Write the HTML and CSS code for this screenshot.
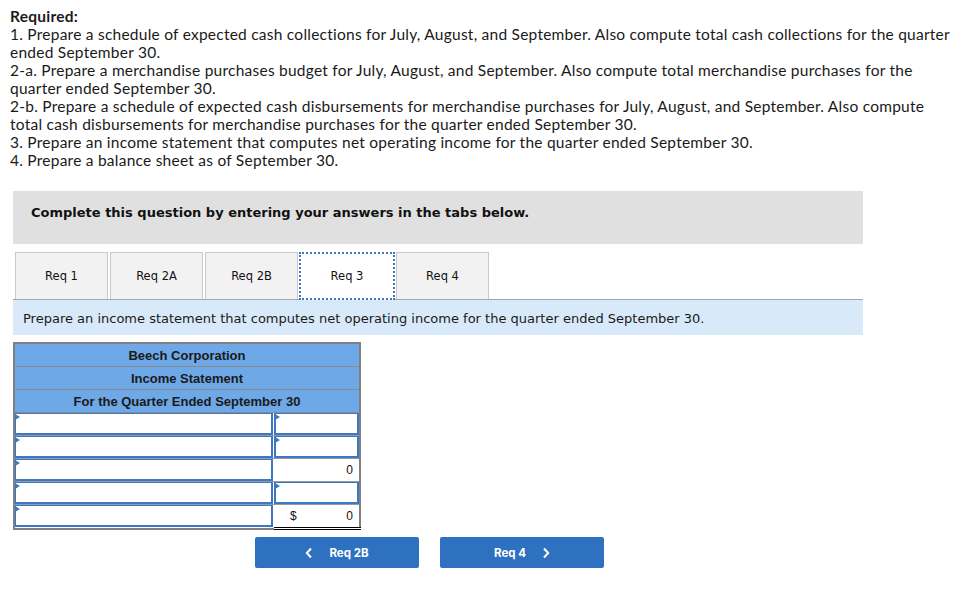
FILE: index.html
```html
<!DOCTYPE html>
<html>
<head>
<meta charset="utf-8">
<link rel="stylesheet" href="styles.css">
</head>
<body>
<div class="required">
  <div class="req-title">Required:</div>
  <div>1. Prepare a schedule of expected cash collections for July, August, and September. Also compute total cash collections for the quarter ended September 30.</div>
  <div>2-a. Prepare a merchandise purchases budget for July, August, and September. Also compute total merchandise purchases for the quarter ended September 30.</div>
  <div>2-b. Prepare a schedule of expected cash disbursements for merchandise purchases for July, August, and September. Also compute total cash disbursements for merchandise purchases for the quarter ended September 30.</div>
  <div>3. Prepare an income statement that computes net operating income for the quarter ended September 30.</div>
  <div>4. Prepare a balance sheet as of September 30.</div>
</div>

<div class="question">
  <div class="notice">Complete this question by entering your answers in the tabs below.</div>
  <div class="tabs">
    <div class="tab">Req 1</div>
    <div class="tab">Req 2A</div>
    <div class="tab">Req 2B</div>
    <div class="tab active">Req 3</div>
    <div class="tab">Req 4</div>
  </div>
  <div class="instruction">Prepare an income statement that computes net operating income for the quarter ended September 30.</div>

  <table class="stmt">
    <tr><th colspan="2">Beech Corporation</th></tr>
    <tr><th colspan="2">Income Statement</th></tr>
    <tr><th colspan="2">For the Quarter Ended September 30</th></tr>
    <tr>
      <td class="lbl"><div class="inp drop"></div></td>
      <td class="amt"><div class="inp drop"></div></td>
    </tr>
    <tr>
      <td class="lbl"><div class="inp drop"></div></td>
      <td class="amt"><div class="inp drop"></div></td>
    </tr>
    <tr>
      <td class="lbl"><div class="inp drop"></div></td>
      <td class="amt total"><div class="calc"><span></span><span>0</span></div></td>
    </tr>
    <tr>
      <td class="lbl"><div class="inp drop"></div></td>
      <td class="amt"><div class="inp drop"></div></td>
    </tr>
    <tr>
      <td class="lbl last"><div class="inp drop"></div></td>
      <td class="amt total grand"><div class="calc"><span>$</span><span>0</span></div></td>
    </tr>
  </table>

  <div class="nav">
    <div class="btn"><svg width="8" height="12" viewBox="0 0 8 12"><polyline points="6,1.5 1.8,6 6,10.5" fill="none" stroke="#fff" stroke-width="2"/></svg><span>Req 2B</span></div>
    <div class="btn"><span>Req 4</span><svg width="8" height="12" viewBox="0 0 8 12"><polyline points="2,1.5 6.2,6 2,10.5" fill="none" stroke="#fff" stroke-width="2"/></svg></div>
  </div>
</div>
</body>
</html>
```

FILE: styles.css
```css
html, body {
  margin: 0;
  padding: 0;
  background: #fff;
}

body {
  color: #1a1a1a;
}

.required {
  font-family: "Lato", "Liberation Sans", sans-serif;
  font-size: 15.5px;
  letter-spacing: 0.24px;
  line-height: 18px;
  padding: 7px 26px 0 10px;
  box-sizing: border-box;
  width: 978px;
}

.req-title {
  font-weight: bold;
}

.question {
  margin: 22px 0 0 13px;
  width: 850px;
  font-family: "DejaVu Sans", Verdana, sans-serif;
}

.notice {
  background: #e0e0e0;
  height: 53px;
  box-sizing: border-box;
  padding: 14px 0 0 18px;
  font-size: 13px;
  font-weight: bold;
  color: #111;
}

.tabs {
  display: flex;
  gap: 2px;
  margin-top: 8px;
  padding-left: 2px;
  border-bottom: 1px solid #a6a6a6;
}

.tab {
  width: 93px;
  height: 47px;
  box-sizing: border-box;
  background: #f2f2f2;
  border: 1px solid #c9c9c9;
  border-bottom: none;
  display: flex;
  align-items: center;
  justify-content: center;
  font-size: 11.5px;
  color: #111;
}

.tab.active {
  background: #fff;
  border: 2px dotted #3b78c7;
  width: 96px;
  height: 48px;
  margin: 0 -1px -1px -1px;
  position: relative;
}

.instruction {
  background: #d8eaf9;
  height: 35px;
  box-sizing: border-box;
  padding: 11px 0 0 10px;
  font-size: 13px;
  color: #1a1a1a;
}

.stmt {
  margin-top: 7px;
  border-collapse: collapse;
  width: 348px;
  border: 2px solid #808080;
  font-family: "Liberation Sans", Arial, sans-serif;
}

.stmt th {
  background: #6ea8e6;
  height: 22px;
  padding: 0;
  font-size: 13px;
  font-weight: bold;
  color: #1a1a1a;
  border-bottom: 1px solid #8a8a8a;
  text-align: center;
}

.stmt td {
  padding: 0;
  height: 22px;
  border-bottom: 1px solid #9a9a9a;
}

.stmt td.lbl {
  width: 258px;
  padding-right: 1px;
}

.inp {
  height: 22px;
  box-sizing: border-box;
  border: 2px solid #3c78c5;
  border-top-width: 1px;
  background: #fff;
  position: relative;
}

.stmt td.lbl .inp {
  border-left-width: 1px;
}

.drop::before {
  content: "";
  position: absolute;
  left: -1px;
  top: 0;
  border-top: 3px solid transparent;
  border-bottom: 3px solid transparent;
  border-left: 5px solid #3c78c5;
}

.stmt td.total {
  border-top: 1px solid #000;
  background: #fff;
}

.stmt td.grand {
  border-bottom: 3px double #000;
}

.calc {
  display: flex;
  justify-content: space-between;
  padding: 0 6px 0 16px;
  font-size: 12px;
  color: #111;
  line-height: 21px;
}

.nav {
  display: flex;
  gap: 21px;
  margin: 7px 0 0 242px;
}

.btn {
  width: 164px;
  height: 31px;
  background: #2e71c0;
  border-radius: 2px;
  display: flex;
  align-items: center;
  justify-content: center;
  gap: 16px;
  color: #fff;
  font-family: "Inter", "Liberation Sans", sans-serif;
  font-weight: bold;
  font-size: 11.5px;
}
```
